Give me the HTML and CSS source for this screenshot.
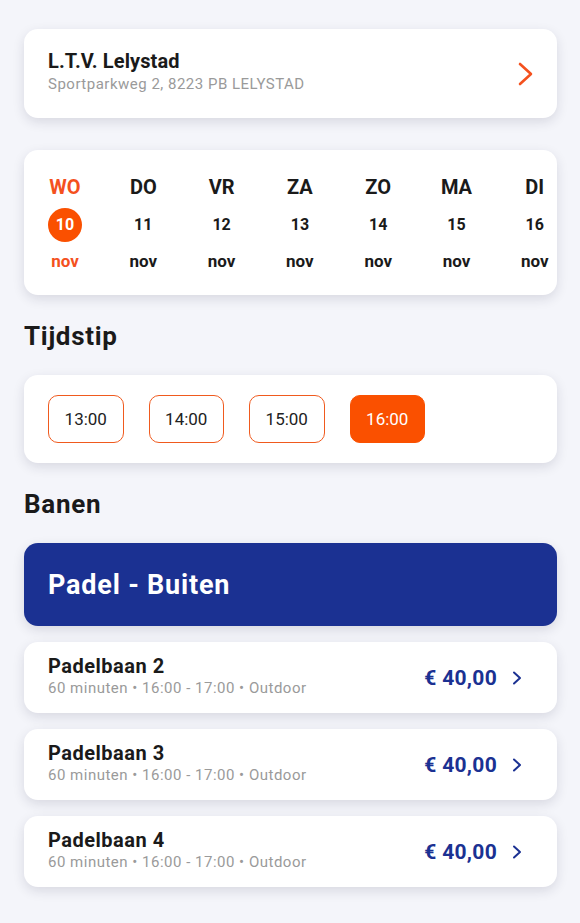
FILE: index.html
```html
<!DOCTYPE html>
<html lang="nl">
<head>
    <meta charset="UTF-8">
    <meta name="viewport" content="width=device-width, initial-scale=1.0">
    <title>Baan reserveren</title>
    <link rel="stylesheet" href="styles.css">
</head>
<body>

    <main class="page">
        <a class="card club" href="#">
            <div class="club-info">
                <div class="club-name">L.T.V. Lelystad</div>
                <div class="club-address">Sportparkweg 2, 8223 PB LELYSTAD</div>
            </div>
            <svg class="club-arrow" width="15" height="24" viewBox="0 0 15 24">
                <path d="M2 2 L13 12 L2 22" fill="none" stroke="#f4511e" stroke-width="2.6" stroke-linecap="round" stroke-linejoin="round"/>
            </svg>
        </a>

        <section class="card dates">
            <div class="day active">
                <span class="day-name">WO</span>
                <span class="day-num">10</span>
                <span class="day-month">nov</span>
            </div>
            <div class="day">
                <span class="day-name">DO</span>
                <span class="day-num">11</span>
                <span class="day-month">nov</span>
            </div>
            <div class="day">
                <span class="day-name">VR</span>
                <span class="day-num">12</span>
                <span class="day-month">nov</span>
            </div>
            <div class="day">
                <span class="day-name">ZA</span>
                <span class="day-num">13</span>
                <span class="day-month">nov</span>
            </div>
            <div class="day">
                <span class="day-name">ZO</span>
                <span class="day-num">14</span>
                <span class="day-month">nov</span>
            </div>
            <div class="day">
                <span class="day-name">MA</span>
                <span class="day-num">15</span>
                <span class="day-month">nov</span>
            </div>
            <div class="day">
                <span class="day-name">DI</span>
                <span class="day-num">16</span>
                <span class="day-month">nov</span>
            </div>
        </section>

        <h2 class="section-title">Tijdstip</h2>
        <section class="card times">
            <button class="time">13:00</button>
            <button class="time">14:00</button>
            <button class="time">15:00</button>
            <button class="time selected">16:00</button>
        </section>

        <h2 class="section-title">Banen</h2>
        <div class="category">Padel - Buiten</div>

        <div class="courts">
            <a class="card court" href="#">
                <div class="court-info">
                    <div class="court-name">Padelbaan 2</div>
                    <div class="court-meta">60 minuten &bull; 16:00 - 17:00 &bull; Outdoor</div>
                </div>
                <span class="court-price">&euro; 40,00</span>
                <svg class="court-arrow" width="10" height="14" viewBox="0 0 10 14">
                    <path d="M2 1.5 L8 7 L2 12.5" fill="none" stroke="#1b3192" stroke-width="2" stroke-linecap="round" stroke-linejoin="round"/>
                </svg>
            </a>
            <a class="card court" href="#">
                <div class="court-info">
                    <div class="court-name">Padelbaan 3</div>
                    <div class="court-meta">60 minuten &bull; 16:00 - 17:00 &bull; Outdoor</div>
                </div>
                <span class="court-price">&euro; 40,00</span>
                <svg class="court-arrow" width="10" height="14" viewBox="0 0 10 14">
                    <path d="M2 1.5 L8 7 L2 12.5" fill="none" stroke="#1b3192" stroke-width="2" stroke-linecap="round" stroke-linejoin="round"/>
                </svg>
            </a>
            <a class="card court" href="#">
                <div class="court-info">
                    <div class="court-name">Padelbaan 4</div>
                    <div class="court-meta">60 minuten &bull; 16:00 - 17:00 &bull; Outdoor</div>
                </div>
                <span class="court-price">&euro; 40,00</span>
                <svg class="court-arrow" width="10" height="14" viewBox="0 0 10 14">
                    <path d="M2 1.5 L8 7 L2 12.5" fill="none" stroke="#1b3192" stroke-width="2" stroke-linecap="round" stroke-linejoin="round"/>
                </svg>
            </a>
        </div>
    </main>

</body>
</html>
```

FILE: styles.css
```css
body {
    margin: 0;
    background: #f4f5fa;
    font-family: Roboto, "Noto Sans", sans-serif;
    color: #1a1a1a;
}
.page {
    padding: 29px 23px 30px 24px;
}
.card {
    background: #fff;
    border-radius: 14px;
    box-shadow: 0 4px 12px rgba(30, 30, 60, 0.13);
}
a.card {
    color: inherit;
    text-decoration: none;
}

/* club */
.club {
    display: flex;
    align-items: center;
    height: 89px;
    padding: 0 24px;
    box-sizing: border-box;
}
.club-info {
    flex: 1;
    padding-bottom: 4px;
}
.club-name {
    font-size: 20px;
    font-weight: 700;
    line-height: 25px;
    letter-spacing: 0.1px;
}
.club-address {
    font-size: 15px;
    line-height: 20px;
    letter-spacing: 0.5px;
    color: #9a9a9a;
}

/* dates */
.dates {
    display: grid;
    grid-template-columns: repeat(7, 34px);
    column-gap: 44.3px;
    margin-top: 32px;
    padding: 24px 24px 23px;
    overflow: hidden;
}
.day {
    display: flex;
    flex-direction: column;
    align-items: center;
    font-weight: 700;
}
.day-name {
    font-size: 20px;
    line-height: 26px;
}
.day-num {
    width: 34px;
    height: 34px;
    margin: 8px 0;
    border-radius: 50%;
    font-size: 16px;
    line-height: 34px;
    text-align: center;
}
.day-month {
    font-size: 17px;
    line-height: 22px;
}
.day.active .day-name,
.day.active .day-month {
    color: #f4511e;
}
.day.active .day-num {
    background: #fa5000;
    color: #fff;
}

/* headings */
.section-title {
    margin: 26px 0 24px;
    font-size: 26px;
    font-weight: 700;
    line-height: 30px;
    letter-spacing: 0.7px;
}

/* times */
.times {
    display: flex;
    gap: 25px;
    padding: 20px 24px;
}
.time {
    width: 75.5px;
    height: 48px;
    border: 1.5px solid #f05a1e;
    border-radius: 10px;
    background: #fff;
    font-family: inherit;
    font-size: 17px;
    color: #222;
}
.time.selected {
    background: #fa5000;
    border-color: #fa5000;
    color: #fff;
}

/* courts */
.category {
    display: flex;
    align-items: center;
    height: 83px;
    padding: 0 24px;
    box-sizing: border-box;
    border-radius: 14px;
    background: #1b3192;
    color: #fff;
    font-size: 27px;
    font-weight: 700;
    letter-spacing: 0.8px;
    box-shadow: 0 4px 12px rgba(30, 30, 60, 0.13);
}
.courts {
    display: flex;
    flex-direction: column;
    gap: 16px;
    margin-top: 16px;
}
.court {
    display: flex;
    align-items: center;
    height: 71px;
    padding: 0 35px 0 24px;
    box-sizing: border-box;
}
.court-info {
    flex: 1;
    padding-bottom: 3px;
}
.court-name {
    font-size: 20px;
    font-weight: 700;
    line-height: 24px;
    letter-spacing: 0.5px;
}
.court-meta {
    font-size: 15px;
    line-height: 20px;
    letter-spacing: 0.5px;
    color: #9a9a9a;
}
.court-price {
    margin-right: 15px;
    font-size: 21px;
    font-weight: 700;
    letter-spacing: 0.3px;
    color: #1b3192;
}
```
